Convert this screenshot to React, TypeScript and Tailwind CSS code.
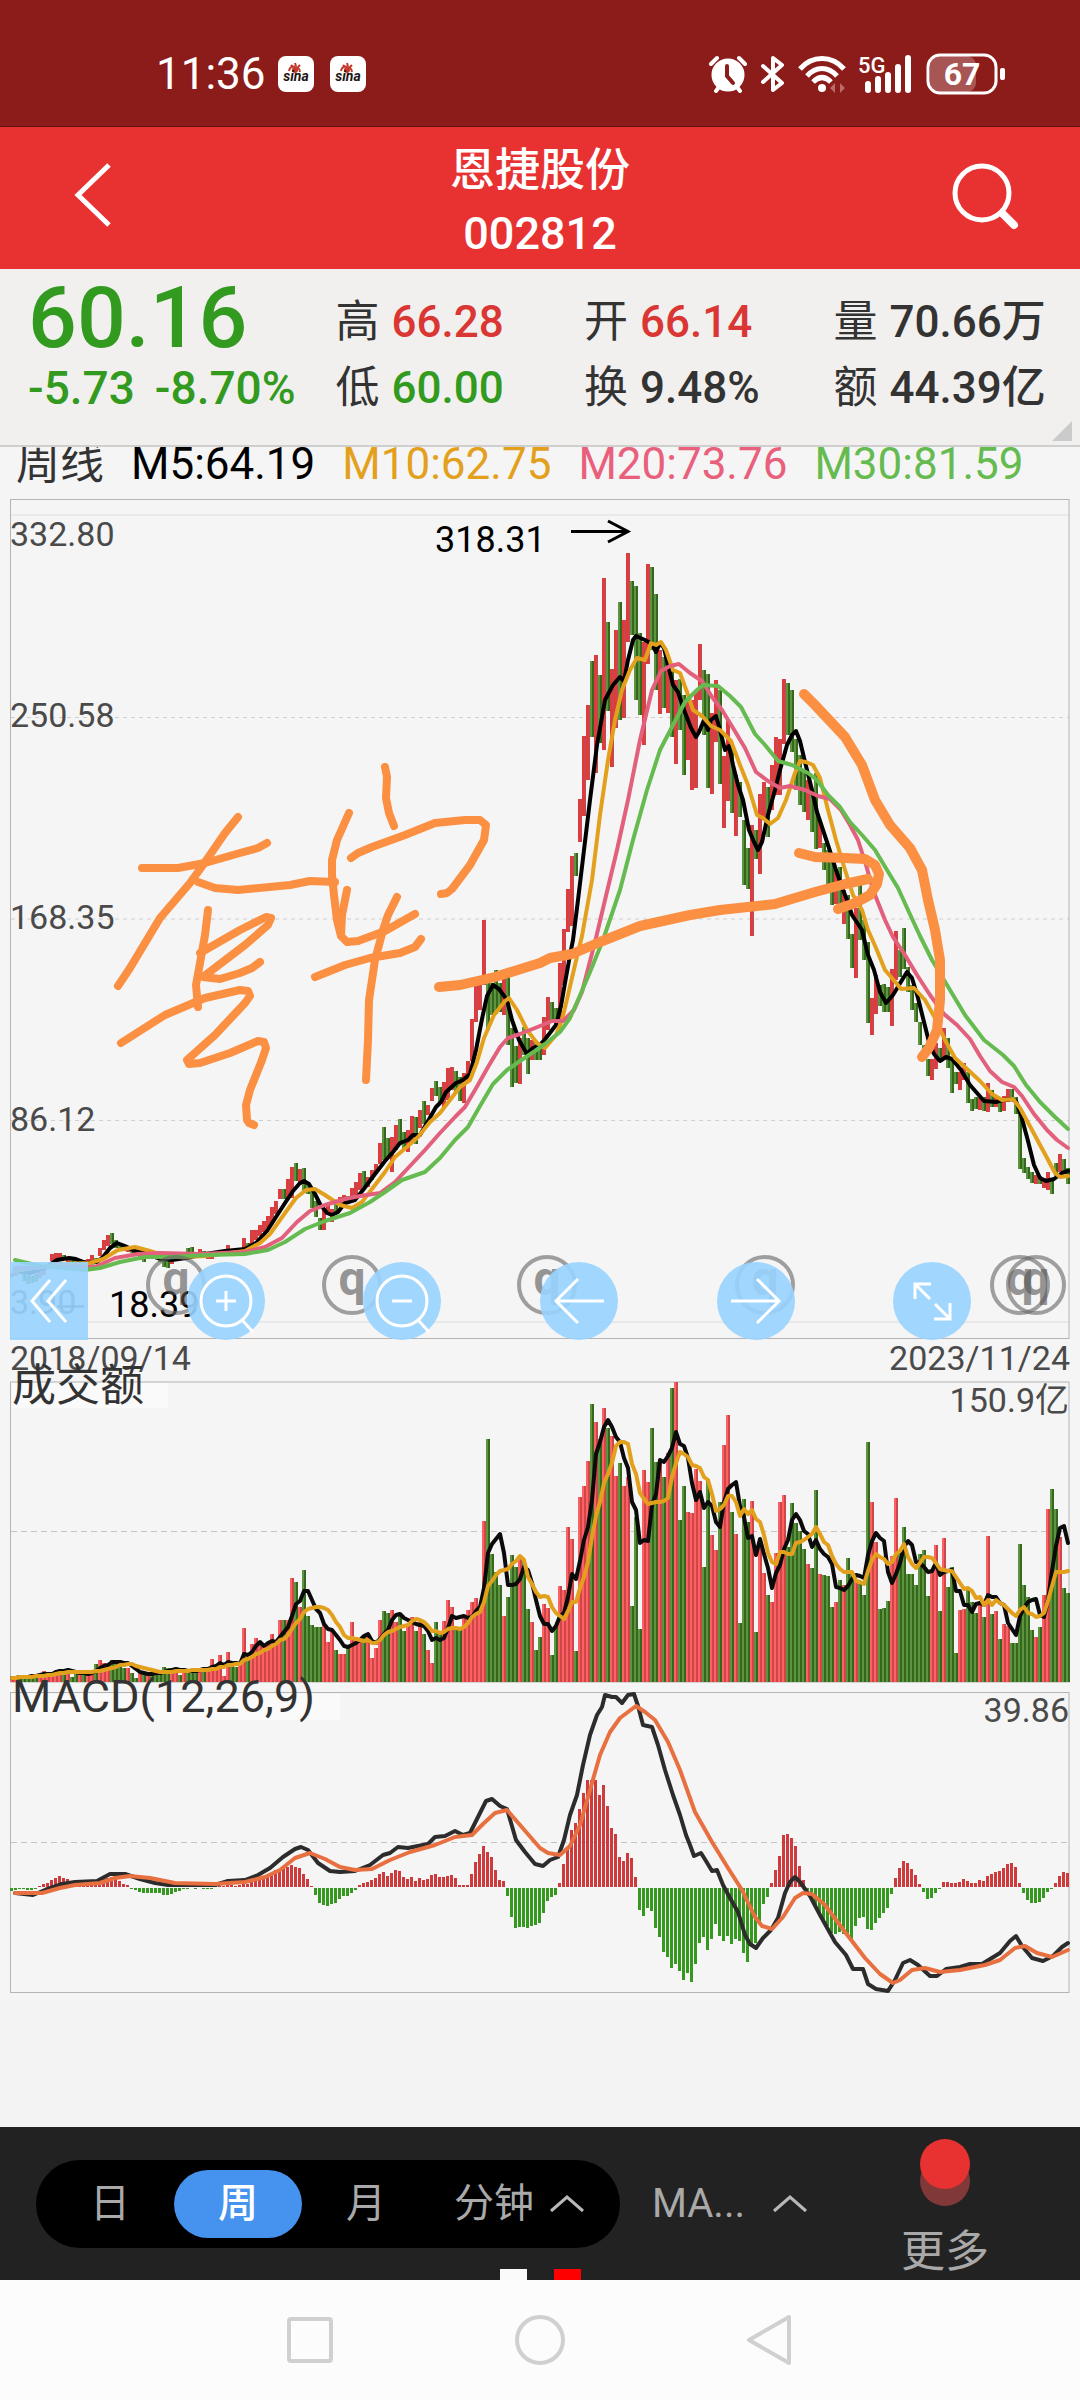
import type { ReactNode } from "react";

// weekly turnover, one value per bar; negative = down week
const turnover = [
  4, 5, -5, -6, -6, -7, -6, 8, 11, 8,
  9, 12, 13, -12, 13, -5, -9, 8, -9, 10,
  9, -18, 22, 19, 17, -22, -21, -22, -14, 14,
  -9, -4, 10, -10, 9, -8, -8, -12, -15, -14,
  13, 13, -7, 12, -12, -13, -10, 14, -15, 14,
  23, 15, 27, 6, 30, -19, -15, 20, 54, -25,
  38, 44, 38, 36, 38, 48, 40, 62, -62, 62,
  104, -100, 75, -112, -66, -57, -55, -55, 57, 40,
  52, -32, 28, 28, -35, 60, 45, 42, -46, 48,
  24, 34, 62, -71, -69, 72, 60, -67, -51, 58,
  65, -51, 60, -48, 32, 19, -60, -50, 61, 82,
  75, -52, -55, 65, 72, 80, 84, 75, 161, -243,
  -128, -110, -97, 66, -85, -127, -115, 124, -122, -73,
  60, -32, -45, 78, 74, -27, -55, 96, 92, 155,
  143, -31, 185, 196, 221, -278, 260, -243, 274, -254,
  246, 206, -219, 196, 205, -76, -165, -53, 212, 200,
  -254, -220, 222, -205, 229, -294, 300, -162, -196, 170,
  169, 213, 201, -115, -203, 147, 132, -180, 237, 267,
  -170, 148, -59, -183, -160, 181, -50, 142, 109, -87,
  80, 129, 180, 187, -135, -179, -159, -151, -133, 118,
  -114, -192, 108, -107, -106, -75, 80, -102, 97, -124,
  -110, 101, -98, -87, -240, 180, 140, -73, -74, -81,
  126, 184, -130, -155, -108, -108, -97, -128, -132, -86,
  110, 137, -71, 144, -95, -115, -29, 72, 73, -95,
  -80, -69, 77, -65, 146, -68, 71, -43, 58, 56,
  -39, -39, -138, -97, -85, -52, 45, -55, 87, 173,
  -193, -173, 145, -94, -89,
];

const ranges = [
  [1273, 1277], [1272, 1276], [1272, 1274], [1273, 1281], [1275, 1284], [1276, 1283], [1274, 1282], [1272, 1278], [1270, 1275], [1264, 1269],
  [1254, 1261], [1253, 1260], [1253, 1260], [1255, 1260], [1258, 1262], [1258, 1262], [1259, 1263], [1259, 1262], [1260, 1264], [1259, 1263],
  [1255, 1262], [1258, 1262], [1248, 1256], [1240, 1250], [1235, 1246], [1233, 1244], [1240, 1248], [1243, 1249], [1246, 1251], [1246, 1252],
  [1248, 1253], [1249, 1254], [1252, 1260], [1253, 1262], [1253, 1257], [1253, 1258], [1254, 1259], [1255, 1262], [1258, 1267], [1259, 1268],
  [1257, 1264], [1256, 1260], [1254, 1259], [1252, 1256], [1248, 1254], [1247, 1254], [1252, 1258], [1249, 1256], [1251, 1257], [1252, 1259],
  [1252, 1259], [1253, 1256], [1252, 1255], [1251, 1254], [1245, 1253], [1249, 1254], [1250, 1253], [1249, 1252], [1238, 1248], [1243, 1248],
  [1230, 1245], [1230, 1240], [1225, 1236], [1221, 1232], [1216, 1228], [1207, 1223], [1201, 1214], [1189, 1199], [1189, 1199], [1179, 1198],
  [1167, 1198], [1163, 1181], [1169, 1185], [1168, 1193], [1184, 1194], [1190, 1208], [1201, 1217], [1218, 1230], [1208, 1230], [1205, 1214],
  [1209, 1222], [1204, 1213], [1197, 1206], [1195, 1203], [1196, 1204], [1188, 1202], [1182, 1195], [1173, 1190], [1171, 1187], [1177, 1187],
  [1170, 1180], [1164, 1174], [1143, 1164], [1127, 1160], [1138, 1158], [1137, 1172], [1125, 1150], [1119, 1145], [1132, 1150], [1130, 1152],
  [1116, 1142], [1117, 1144], [1110, 1128], [1101, 1124], [1105, 1115], [1088, 1101], [1081, 1096], [1087, 1102], [1082, 1107], [1068, 1100],
  [1067, 1090], [1071, 1092], [1077, 1101], [1073, 1103], [1061, 1080], [1019, 1061], [983, 1022], [984, 1010], [920, 985], [975, 1030],
  [983, 1015], [970, 1014], [983, 1012], [972, 1015], [976, 1045], [1028, 1087], [1046, 1083], [1038, 1084], [1027, 1055], [1038, 1074],
  [1040, 1060], [1042, 1060], [1045, 1060], [1017, 1055], [997, 1030], [1002, 1020], [1008, 1025], [963, 1020], [929, 985], [889, 932],
  [856, 926], [853, 876], [799, 842], [736, 816], [705, 780], [661, 737], [655, 773], [675, 743], [578, 750], [622, 711],
  [669, 767], [630, 728], [602, 720], [620, 718], [553, 642], [581, 635], [586, 700], [633, 715], [642, 745], [564, 664],
  [567, 650], [594, 690], [650, 714], [657, 708], [660, 713], [670, 737], [680, 764], [679, 730], [695, 775], [700, 760],
  [700, 790], [690, 788], [644, 700], [670, 735], [674, 788], [713, 794], [680, 742], [690, 784], [756, 828], [720, 801],
  [743, 813], [775, 836], [782, 817], [820, 885], [848, 889], [825, 936], [830, 859], [794, 874], [782, 820], [787, 837],
  [765, 810], [737, 795], [739, 795], [679, 744], [683, 735], [690, 752], [739, 790], [755, 805], [770, 812], [780, 820],
  [790, 832], [773, 849], [820, 848], [843, 870], [850, 885], [860, 905], [870, 904], [867, 905], [890, 924], [895, 939],
  [934, 968], [908, 978], [885, 940], [920, 960], [942, 1023], [998, 1035], [975, 1014], [985, 1006], [984, 1012], [987, 1012],
  [969, 1026], [931, 980], [950, 977], [928, 969], [967, 992], [985, 1010], [1003, 1022], [1022, 1045], [1045, 1060], [1059, 1076],
  [1059, 1080], [1043, 1069], [1048, 1060], [1028, 1058], [1038, 1068], [1060, 1093], [1072, 1084], [1072, 1090], [1063, 1080], [1072, 1103],
  [1099, 1111], [1097, 1109], [1098, 1110], [1097, 1111], [1083, 1112], [1090, 1107], [1097, 1107], [1098, 1112], [1096, 1111], [1089, 1102],
  [1089, 1101], [1097, 1114], [1110, 1169], [1158, 1173], [1167, 1179], [1172, 1183], [1175, 1184], [1176, 1184], [1178, 1188], [1172, 1190],
  [1178, 1194], [1163, 1176], [1154, 1172], [1159, 1172], [1168, 1184],
];

const histogram = [
  -3, -2, -1, -1, -2, -2, -1, 1, 3, 4,
  7, 9, 11, 9, 8, 6, 5, 5, 5, 5,
  5, 6, 6, 8, 9, 10, 8, 6, 3, 2,
  -1, -2, -4, -5, -5, -5, -5, -5, -7, -7,
  -6, -4, -3, -1, -1, 1, -1, 1, -1, -1,
  -1, 1, 1, 1, 2, 2, 1, 2, 3, 3,
  5, 6, 8, 10, 12, 14, 17, 18, 19, 20,
  22, 20, 19, 13, 8, 1, -7, -15, -17, -18,
  -16, -15, -11, -8, -8, -5, -2, 2, 4, 5,
  7, 9, 13, 15, 11, 14, 17, 16, 10, 8,
  10, 6, 9, 7, 8, 12, 13, 10, 10, 11,
  12, 9, 2, 2, 2, 13, 25, 33, 41, 35,
  30, 17, 7, 6, -8, -29, -40, -39, -39, -40,
  -38, -37, -35, -25, -13, -9, -7, 4, 23, 40,
  57, 64, 78, 94, 107, 107, 107, 92, 102, 81,
  59, 53, 30, 26, 34, 29, 10, -22, -28, -20,
  -23, -40, -49, -64, -69, -80, -76, -83, -92, -85,
  -94, -76, -55, -49, -62, -51, -36, -48, -53, -48,
  -56, -51, -53, -65, -74, -59, -55, -35, -16, -9,
  4, 17, 31, 52, 53, 49, 41, 21, 7, -2,
  -10, -18, -25, -32, -38, -45, -46, -44, -46, -46,
  -51, -38, -30, -29, -41, -42, -35, -30, -25, -20,
  -6, 9, 19, 26, 24, 18, 12, 3, -4, -11,
  -10, -5, -1, 5, 5, 4, 4, 5, 8, 6,
  4, 4, 7, 6, 11, 13, 15, 16, 19, 23,
  24, 20, 4, -5, -12, -15, -15, -14, -10, -4,
  -1, 4, 11, 15, 14,
];

const ma5 =
  "15,1270 30,1273 45,1268 57,1260 69,1258 76,1259 86,1263 97,1262 103,1257 110,1248 117,1243 125,1246 135,1251 144,1253 158,1258 172,1260 186,1258 205,1254 225,1251 245,1249 256,1243 267,1231 276,1217 285,1203 293,1191 300,1183 304,1181 309,1184 315,1194 320,1204 327,1213 332,1215 338,1212 345,1203 355,1200 363,1190 375,1174 385,1161 393,1152 400,1143 408,1140 413,1135 420,1135 428,1121 436,1107 441,1102 446,1092 456,1083 463,1080 470,1074 476,1050 482,1019 487,996 493,985 499,989 507,1000 512,1020 519,1040 527,1054 533,1048 540,1045 546,1038 556,1025 561,1006 565,983 570,955 573,940 578,900 584,850 590,800 597,745 605,700 613,685 620,677 624,681 628,660 633,640 636,636 645,640 652,644 656,652 660,643 664,648 668,665 673,685 678,692 684,710 691,728 696,737 699,732 704,720 708,730 711,720 716,716 720,730 725,750 729,746 733,765 738,785 743,800 749,830 754,842 758,850 762,842 768,815 775,790 780,770 787,745 792,735 796,731 800,741 805,762 812,790 817,812 823,830 829,848 836,870 843,890 847,900 852,915 862,930 868,955 874,970 880,992 886,1003 893,995 899,985 907,972 912,978 918,998 924,1022 929,1042 934,1054 940,1061 946,1057 952,1059 961,1070 970,1085 984,1101 996,1102 1003,1100 1011,1099 1016,1101 1021,1115 1028,1141 1034,1165 1040,1178 1046,1181 1054,1179 1062,1173 1068,1171";
const ma10 =
  "15,1271 60,1264 90,1263 103,1259 118,1250 135,1247 150,1251 165,1256 185,1257 205,1256 245,1251 260,1243 270,1234 285,1213 296,1198 306,1190 315,1189 325,1195 340,1205 352,1208 362,1202 372,1189 385,1172 395,1157 408,1146 418,1137 430,1122 440,1113 450,1100 460,1087 470,1080 477,1062 484,1038 494,1015 505,1001 509,998 517,1010 527,1030 537,1043 545,1048 556,1035 562,1020 568,995 575,965 582,936 592,880 600,815 608,760 615,720 622,690 630,670 637,658 645,660 651,643 656,645 661,642 666,650 673,670 680,673 687,692 693,710 702,716 711,726 720,730 731,741 740,765 748,785 757,815 763,818 770,824 778,818 786,800 795,773 800,761 806,762 813,765 820,778 828,810 836,840 845,870 853,895 862,910 868,930 876,948 885,970 897,984 901,989 914,988 925,1000 935,1018 945,1040 955,1058 966,1068 980,1081 992,1094 1002,1100 1013,1099 1020,1108 1032,1130 1046,1156 1055,1173 1060,1177 1068,1176";
const ma20 =
  "15,1268 60,1267 95,1267 115,1258 138,1254 160,1253 200,1254 245,1252 265,1247 282,1238 297,1222 310,1211 325,1205 345,1199 360,1196 380,1193 395,1182 410,1166 425,1150 440,1133 455,1117 465,1107 475,1090 488,1067 500,1047 508,1038 520,1034 540,1026 552,1021 563,1021 574,1010 582,992 589,965 596,938 605,900 617,850 628,800 640,740 652,690 661,671 670,666 679,664 690,673 702,681 712,697 722,710 733,728 745,748 756,772 768,781 780,788 790,786 805,790 818,796 830,799 841,810 850,825 858,840 866,865 873,890 885,920 893,937 905,955 917,975 930,995 944,1014 957,1025 970,1039 980,1056 990,1071 1002,1082 1014,1087 1022,1096 1034,1114 1047,1130 1057,1140 1068,1148";
const ma30 =
  "15,1260 40,1266 85,1270 100,1268 120,1262 145,1257 170,1257 210,1255 245,1254 268,1250 285,1242 305,1229 325,1221 350,1213 370,1202 385,1192 402,1180 425,1172 440,1158 455,1140 468,1127 480,1106 493,1084 507,1070 520,1061 535,1051 545,1044 560,1032 570,1018 578,1000 590,972 603,940 620,890 633,840 647,790 660,750 673,725 685,702 697,690 703,685 718,686 730,696 741,707 755,734 765,745 778,761 792,765 808,773 817,780 828,795 840,807 850,822 862,835 875,850 887,870 898,888 908,910 920,936 932,960 947,985 965,1015 984,1040 1003,1055 1014,1066 1026,1085 1040,1102 1055,1117 1068,1129";
const dif =
  "15,1893 33,1895 45,1890 62,1884 75,1882 97,1881 110,1874 125,1874 140,1879 155,1883 168,1885 190,1885 215,1885 228,1881 245,1880 258,1875 270,1868 283,1857 295,1849 301,1847 308,1850 318,1863 330,1871 340,1872 355,1871 370,1865 383,1855 390,1853 398,1847 408,1848 428,1844 435,1837 445,1836 455,1831 463,1835 470,1833 478,1817 486,1801 492,1799 500,1806 507,1809 516,1840 525,1852 535,1864 543,1866 550,1860 558,1857 564,1840 570,1815 577,1795 583,1765 590,1735 597,1715 602,1707 605,1695 612,1697 616,1697 622,1703 628,1695 634,1694 638,1706 643,1725 652,1727 658,1745 665,1770 673,1795 680,1815 686,1835 690,1845 694,1856 701,1853 706,1861 712,1871 717,1870 723,1885 730,1898 738,1912 745,1935 750,1944 756,1948 763,1938 771,1930 778,1918 785,1893 790,1882 795,1877 800,1882 810,1896 820,1915 835,1942 846,1955 853,1969 863,1969 868,1984 876,1989 888,1991 895,1980 903,1963 910,1960 918,1965 930,1976 937,1976 946,1969 960,1967 970,1964 982,1964 1000,1953 1010,1941 1016,1936 1022,1946 1032,1958 1043,1961 1053,1956 1062,1947 1068,1943";
const dea =
  "15,1893 42,1893 60,1888 75,1885 100,1883 115,1878 130,1876 150,1878 175,1883 215,1884 245,1882 265,1877 280,1870 295,1858 310,1853 325,1859 340,1867 355,1870 372,1869 390,1860 410,1852 435,1845 455,1837 472,1835 483,1824 495,1813 507,1810 520,1825 540,1848 548,1853 560,1855 570,1846 580,1825 590,1790 600,1755 610,1732 620,1718 636,1706 645,1712 655,1720 668,1742 680,1770 695,1812 712,1842 728,1868 742,1890 755,1917 762,1926 772,1929 783,1917 795,1898 803,1893 812,1894 825,1905 845,1932 865,1958 880,1974 893,1983 900,1980 912,1970 925,1968 940,1972 960,1970 985,1965 1000,1960 1015,1948 1025,1946 1037,1953 1052,1957 1068,1950";

const thinStrokes = [
  "238,817 225,833 203,865 190,883 160,918 145,943 130,968 118,986",
  "142,868 178,868 205,863 240,853 258,848 267,843",
  "198,882 215,888 238,890 290,885 310,881 335,882",
  "208,910 205,935 200,963 196,985 198,1007",
  "200,953 240,930 266,917 271,918 268,925 245,945 203,977 220,979 240,973 252,968 260,962",
  "121,1043 165,1015 205,998 240,990 248,991 250,996 245,1003 215,1035 187,1060 189,1064 200,1063 230,1053 258,1041 264,1042 266,1048 262,1060 250,1090 246,1105 247,1120 249,1123 254,1125",
  "385,767 387,777 386,798 389,813 394,826",
  "349,813 337,840 332,860 332,875 334,895 337,920 341,936 347,942 358,941 385,931 415,914",
  "347,890 342,915 341,935",
  "351,858 358,853 372,847 405,835 435,823 465,820 480,820 486,825 484,840 470,865 452,889 447,893 441,894",
  "397,897 388,915 383,930 375,960 369,1000 368,1040 366,1080",
  "315,977 345,965 370,958 400,953 415,947 421,939",
];
const thickStrokes = [
  "439,987 460,985 495,977 540,963 550,958 572,954 600,942 640,926 690,915 720,910 775,904 815,892 845,884 868,879",
  "799,853 815,857 845,858 865,859 875,865 879,874 877,884 870,895 855,903 838,909",
  "804,694 815,705 845,737 862,765 875,800 890,825 910,848 922,870 928,900 935,930 940,960 940,1000 937,1030 929,1048 922,1057",
];

const priceLabels = [
  { y: 546, text: "332.80" },
  { y: 727, text: "250.58" },
  { y: 929, text: "168.35" },
  { y: 1131, text: "86.12" },
  { y: 1314, text: "3.90" },
];

const quotes = [
  [{ label: "高", value: "66.28", tone: "text-[#d93634]" }, { label: "低", value: "60.00", tone: "text-[#339a20]" }],
  [{ label: "开", value: "66.14", tone: "text-[#d93634]" }, { label: "换", value: "9.48%", tone: "text-[#333333]" }],
  [{ label: "量", value: "70.66万", tone: "text-[#333333]" }, { label: "额", value: "44.39亿", tone: "text-[#333333]" }],
];

const barX = (i: number) => 12 + i * 4;

function average(size: number) {
  return turnover
    .map((_, i) => {
      const part = turnover.slice(Math.max(0, i - size + 1), i + 1);
      const sum = part.reduce((a, b) => a + Math.abs(b), 0);
      return `${barX(i)},${Math.round(1682 - sum / part.length)}`;
    })
    .join(" ");
}

function Line({ points, color, width = 4 }: { points: string; color: string; width?: number }) {
  return <polyline points={points} fill="none" stroke={color} strokeWidth={width} strokeLinejoin="round" strokeLinecap="round" />;
}

function Bar({ x, top, bottom, light, dark }: { x: number; top: number; bottom: number; light: string; dark: string }) {
  return (
    <>
      <rect x={x - 2} y={top} width={2} height={bottom - top} fill={light} />
      <rect x={x} y={top} width={2} height={bottom - top} fill={dark} />
    </>
  );
}

function PriceChart() {
  return (
    <svg viewBox="0 481 1080 859" className="block w-full" role="img" aria-label="周线">
      <path d="M11 515H1069M11 1322H1069" stroke="#dcdcdc" strokeWidth="1" />
      <path d="M11 717.5H1069M11 919H1069M11 1120.5H1069" stroke="#cfcfcf" strokeWidth="1" strokeDasharray="4 4" />
      <rect x="10.5" y="499.5" width="1058.5" height="839" fill="none" stroke="#b4b4b4" />
      <g fill="#4a4a4a" fontSize="34">
        {priceLabels.map(l => (
          <text key={l.text} x="10" y={l.y}>{l.text}</text>
        ))}
      </g>
      <path d="M57 1306.500H84" stroke="#222" strokeWidth="2" />
      {ranges.map(([top, bottom], i) => (
        <Bar
          key={i}
          x={barX(i)}
          top={top}
          bottom={bottom}
          light={turnover[i] > 0 ? "#e2393a" : "#5d9440"}
          dark={turnover[i] > 0 ? "#c9474a" : "#35681c"}
        />
      ))}
      <Line points={ma5} color="#000" />
      <Line points={ma10} color="#e3a01c" />
      <Line points={ma20} color="#e2607c" />
      <Line points={ma30} color="#66bb50" />
      <g fontSize="36" fill="#000">
        <text x="435" y="552">318.31</text>
        <text x="109" y="1317">18.39</text>
      </g>
      <path d="M571 531.500H627M608 521L628 531.500L608 542" fill="none" stroke="#000" strokeWidth="3" />
      {[176, 352, 547, 765, 1020, 1036].map(x => (
        <g key={x} opacity="0.6">
          <circle cx={x} cy="1285" r="28" fill="none" stroke="#666" strokeWidth="4" />
          <text x={x} y="1295" fontSize="48" fontWeight="700" fill="#555" textAnchor="middle">q</text>
        </g>
      ))}
      {thinStrokes.map(p => <Line key={p} points={p} color="#fb8f42" width={8} />)}
      {thickStrokes.map(p => <Line key={p} points={p} color="#fb8f42" width={10} />)}
    </svg>
  );
}

function IndicatorCharts() {
  return (
    <svg viewBox="0 1340 1080 660" className="block w-full overflow-visible" role="img" aria-label="成交额 MACD">
      <g fontSize="34" fill="#4a4a4a">
        <text x="10" y="1370">2018/09/14</text>
        <text x="1070" y="1370" textAnchor="end">2023/11/24</text>
      </g>

      {/* turnover */}
      <rect x="10.5" y="1382" width="1058.5" height="300" fill="none" stroke="#b4b4b4" />
      <path d="M11 1531.500H1069" stroke="#c4c4c4" strokeDasharray="6 4" />
      <rect x="12" y="1383" width="156" height="25" fill="#fafafa" />
      <text x="12" y="1401" fontSize="44" fill="#333">成交额</text>
      <text x="1069" y="1412" fontSize="34" fill="#4a4a4a" textAnchor="end">150.9亿</text>
      {turnover.map((v, i) => (
        <Bar
          key={i}
          x={barX(i)}
          top={1682 - Math.abs(v)}
          bottom={1682}
          light={v > 0 ? "#fd6163" : "#5d9440"}
          dark={v > 0 ? "#cf4649" : "#35681c"}
        />
      ))}
      <Line points={average(5)} color="#0b0b0b" />
      <Line points={average(10)} color="#e3a01c" />

      {/* macd */}
      <rect x="10.5" y="1692.500" width="1058.5" height="300" fill="none" stroke="#b4b4b4" />
      <path d="M11 1842.500H1069" stroke="#c4c4c4" strokeDasharray="6 4" />
      <rect x="12" y="1694" width="328" height="26" fill="#fafafa" />
      <text x="12" y="1712" fontSize="45" fill="#333">MACD(12,26,9)</text>
      <text x="1069" y="1722" fontSize="34" fill="#4a4a4a" textAnchor="end">39.86</text>
      {histogram.map((v, i) => (
        <rect
          key={i}
          x={barX(i) - 2}
          y={v > 0 ? 1887 - v : 1888}
          width={3}
          height={Math.abs(v)}
          fill={v > 0 ? "#cf3a3d" : "#35991f"}
        />
      ))}
      <Line points={dif} color="#2c2c2c" />
      <Line points={dea} color="#e87040" />
    </svg>
  );
}

function ToolButton({ label, square, children }: { label: string; square?: boolean; children: ReactNode }) {
  return (
    <button
      type="button"
      aria-label={label}
      className={`size-[78px] bg-[#98d3ff]/90 ${square ? "" : "rounded-full"}`}
    >
      <svg viewBox="0 0 78 78" className="size-full" fill="none" stroke="#fff" strokeWidth="3">
        {children}
      </svg>
    </button>
  );
}

function SinaBadge() {
  return (
    <svg viewBox="0 0 36 36" className="size-9" aria-label="sina">
      <rect width="36" height="36" rx="8" fill="#fff" />
      <path d="M11 15C12 9 21 9 22 16M13 9L15 11M17 7L18 10M22 9L20 11" fill="none" stroke="#c3392a" strokeWidth="2" />
      <circle cx="17" cy="14" r="3" fill="#c3392a" />
      <text x="18" y="25" fontSize="14" fontWeight="700" fontStyle="italic" textAnchor="middle" fill="#1d1414">sina</text>
    </svg>
  );
}

function Caret() {
  return (
    <svg viewBox="0 0 34 18" className="h-[18px] w-[34px]" fill="none" stroke="#b8b8b8" strokeWidth="3">
      <path d="M1 16L17 2L33 16" />
    </svg>
  );
}

export default function App() {
  return (
    <div className="flex min-h-screen flex-col bg-[#f5f5f5] font-[Roboto,'Noto_Sans_CJK_SC',sans-serif] text-[#333333]">
      {/* status bar */}
      <div className="flex items-center justify-between border-b border-[#5e1011] bg-[#8b1c1a] pt-[50px] pr-[74px] pb-7 pl-[156px] text-white">
        <div className="flex items-center">
          <span className="mr-3 text-[44px] leading-[48px]">11:36</span>
          <span className="flex gap-4">
            <SinaBadge />
            <SinaBadge />
          </span>
        </div>
        <div className="flex items-center gap-3">
          <svg viewBox="0 0 40 38" className="h-[38px] w-10" fill="none" stroke="#fff" strokeWidth="4" strokeLinecap="round">
            <circle cx="20" cy="20" r="15" fill="#fff" strokeWidth="3" />
            <path d="M3 9L9 3M37 9L31 3M8 36L11 32M32 36L29 32" />
            <path d="M19 11V21L25 28" stroke="#8b1c1a" strokeWidth="4" />
          </svg>
          <svg viewBox="0 0 26 38" className="h-[38px] w-[26px]" fill="none" stroke="#fff" strokeWidth="4" strokeLinejoin="round" strokeLinecap="round">
            <path d="M3 11L22 28L13 35V3L22 10L3 27" />
          </svg>
          <svg viewBox="0 0 48 38" className="h-[38px] w-12" fill="none" stroke="#fff" strokeWidth="5">
            <path d="M2 14C14 0 34 0 46 14M9 21C18 11 30 11 39 21M15 27C21 21 27 21 33 27" />
            <circle cx="24" cy="33" r="4" fill="#fff" stroke="none" />
            <path d="M37 28L32 33L37 38ZM42 28L47 33L42 38Z" stroke="none" fill="#bb6a68" />
          </svg>
          <svg viewBox="0 0 56 38" className="h-[38px] w-14 overflow-visible">
            <text x="0" y="18" fontSize="22" fontWeight="500" fill="#fff">5G</text>
            <path d="M10 29V35M20 24V35M30 20V35M40 12V35M50 3V35" stroke="#fff" strokeWidth="6" strokeLinecap="round" />
          </svg>
          <svg viewBox="0 0 80 42" className="h-[42px] w-20">
            <rect x="4" y="3" width="46" height="36" rx="9" fill="#a85654" />
            <rect x="2" y="2" width="68" height="38" rx="12" fill="none" stroke="#fff" strokeWidth="3" />
            <rect x="74" y="15" width="5" height="12" rx="2" fill="#fff" />
            <text x="36" y="32" fontSize="32" fontWeight="700" textAnchor="middle" fill="#fff">67</text>
          </svg>
        </div>
      </div>

      {/* title */}
      <header className="grid grid-cols-[1fr_auto_1fr] items-start bg-[#e83131] px-[58px] pt-3 pb-1 text-white">
        <button type="button" aria-label="返回" className="mt-6 justify-self-start pl-[14px]">
          <svg viewBox="0 0 44 64" className="h-16 w-11" fill="none" stroke="#fff" strokeWidth="5">
            <path d="M37 2L6 32L37 62" />
          </svg>
        </button>
        <h1 className="text-center text-[45px] leading-[63px] font-medium">
          <span className="block">恩捷股份</span>
          <span className="block">002812</span>
        </h1>
        <button type="button" aria-label="搜索" className="mt-6 justify-self-end">
          <svg viewBox="0 0 70 70" className="size-[70px]" fill="none" stroke="#fff" strokeLinecap="round">
            <circle cx="30" cy="30" r="27" strokeWidth="5" />
            <path d="M51 51L62 62" strokeWidth="8" />
          </svg>
        </button>
      </header>

      {/* quote */}
      <section className="relative grid grid-cols-[307fr_248fr_249fr_246fr] border-b-2 border-[#cfcfcf] bg-[#f1f0ee] pt-5 pb-6 pl-7 text-[44px] leading-[66px]">
        <div className="text-[46px] font-medium text-[#339a20]">
          <div className="-mt-1 pb-1 text-[86px]">60.16</div>
          <div className="flex gap-5">
            <span>-5.73</span>
            <span>-8.70%</span>
          </div>
        </div>
        {quotes.map((col, i) => (
          <dl key={i}>
            {col.map(q => (
              <div key={q.label} className="flex gap-3">
                <dt>{q.label}</dt>
                <dd className={`font-medium ${q.tone}`}>{q.value}</dd>
              </div>
            ))}
          </dl>
        ))}
        <svg viewBox="0 0 20 20" className="absolute right-2 bottom-1 size-5">
          <path d="M20 0V20H0Z" fill="#cbcbcb" />
        </svg>
      </section>

      <div className="flex gap-[27px] pl-4 text-[44px] leading-[34px]">
        <span>周线</span>
        <span className="text-black">M5:64.19</span>
        <span className="text-[#e3a01c]">M10:62.75</span>
        <span className="text-[#e8607c]">M20:73.76</span>
        <span className="text-[#66bb50]">M30:81.59</span>
      </div>

      <main>
        <div className="relative">
          <PriceChart />
          <div className="absolute bottom-0 left-[10px] flex w-[89%] justify-between">
            <ToolButton label="最早" square>
              <path d="M40 18L22 39L40 60M56 18L38 39L56 60" />
            </ToolButton>
            <ToolButton label="放大">
              <circle cx="39" cy="39" r="25" />
              <path d="M39 29V49M29 39H49M56 59L66 70" />
            </ToolButton>
            <ToolButton label="缩小">
              <circle cx="39" cy="39" r="25" />
              <path d="M29 39H49M56 59L66 70" />
            </ToolButton>
            <ToolButton label="左移">
              <path d="M64 39H16M38 17L16 39L38 61" />
            </ToolButton>
            <ToolButton label="右移">
              <path d="M14 39H62M40 17L62 39L40 61" />
            </ToolButton>
            <ToolButton label="全屏">
              <path d="M38 22H22V37M22 22L37 37M57 41V57H41M57 57L42 42" />
            </ToolButton>
          </div>
        </div>
        <IndicatorCharts />
      </main>

      {/* period toolbar */}
      <div className="flex-1 bg-[#f3f3f3]" />
      <div className="relative flex items-center justify-between bg-[#222222] pr-[91px] pl-9 text-[40px] text-[#a9a9a9]">
        <div className="flex items-center gap-8">
          <div className="flex items-center rounded-[44px] bg-black py-[10px] pr-9 pl-[10px] leading-[68px]">
            <button type="button" className="w-32">日</button>
            <button type="button" className="w-32 rounded-[34px] bg-[#4693ef] font-medium text-white">周</button>
            <button type="button" className="w-32">月</button>
            <button type="button" className="ml-6 flex items-center gap-4">分钟 <Caret /></button>
          </div>
          <button type="button" className="flex items-center gap-7">MA... <Caret /></button>
        </div>
        <a href="#more" className="flex flex-col items-center gap-4 pt-[11px] text-[44px] leading-[56px]">
          <svg viewBox="0 0 52 70" className="h-[70px] w-[52px]">
            <circle cx="26" cy="43" r="25" fill="#803838" />
            <circle cx="26" cy="26" r="25" fill="#e83131" />
          </svg>
          更多
        </a>
        <div className="absolute inset-x-0 bottom-0 flex justify-center gap-[27px]">
          <span className="h-[11px] w-[27px] bg-[#fafafa]" />
          <span className="h-[11px] w-[27px] bg-[#ff0000]" />
        </div>
      </div>

      {/* system navigation */}
      <nav className="flex items-center justify-center gap-[178px] bg-[#fcfcfc] py-[34px]">
        <button type="button" aria-label="最近任务">
          <svg viewBox="0 0 52 52" className="size-[52px]" fill="none" stroke="#d0d0d0" strokeWidth="4">
            <rect x="5" y="5" width="42" height="42" rx="2" />
          </svg>
        </button>
        <button type="button" aria-label="主页">
          <svg viewBox="0 0 52 52" className="size-[52px]" fill="none" stroke="#d0d0d0" strokeWidth="4">
            <circle cx="26" cy="26" r="23" />
          </svg>
        </button>
        <button type="button" aria-label="返回上一页">
          <svg viewBox="0 0 52 52" className="size-[52px]" fill="none" stroke="#d0d0d0" strokeWidth="4" strokeLinejoin="round">
            <path d="M45 3V49L5 26Z" />
          </svg>
        </button>
      </nav>
    </div>
  );
}
